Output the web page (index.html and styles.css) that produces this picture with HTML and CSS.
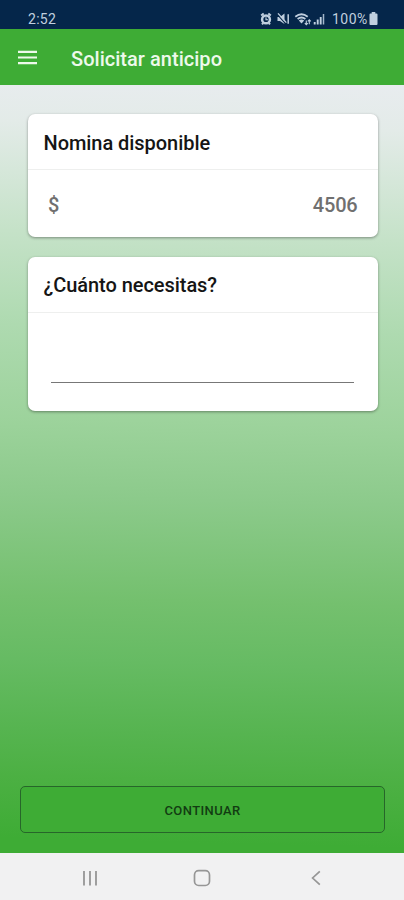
FILE: index.html
```html
<!DOCTYPE html>
<html lang="es">
<head>
<meta charset="utf-8">
<title>Solicitar anticipo</title>
<link rel="stylesheet" href="styles.css">
</head>
<body>
<div class="screen">
  <div class="status">
    <span class="time">2:52</span>
    <svg class="status-icons" width="66" height="16" viewBox="0 0 66 16" fill="none" stroke="currentColor">
      <circle cx="6" cy="8.4" r="3.9" stroke-width="2.5"/>
      <path d="M1.2 4.5 3.7 2.4M10.8 4.5 8.3 2.4M2 13.4 3.2 12M10 13.4 8.8 12" stroke-width="2"/>
      <path d="M6 6.3V8.8H8" stroke-width="1.1"/>
      <path d="M17.5 6H20L24.5 2.5V13L20 10H17.5Z" fill="currentColor" stroke="none"/>
      <path d="M17.2 3.4 25.7 12.8" stroke="#05264a" stroke-width="1.2"/>
      <path d="M18 2.4 26.3 11.6" stroke-width="1.4"/>
      <path d="M28.2 3.2V12.8" stroke-width="1.5"/>
      <path d="M35.3 5.7Q41.5 .8 47.7 5.7M37.6 8Q41.5 5 45.4 8" stroke-width="1.8"/>
      <path d="M38.8 9.5Q41.5 7.5 44.2 9.5L41.5 12.5Z" fill="currentColor" stroke="none"/>
      <path d="M46.3 9.5V13.8M44.8 12.2 46.3 13.8 47.8 12.2M49.3 13.2V8.8M47.8 10.4 49.3 8.8 50.8 10.4" stroke-width="1.1"/>
      <path d="M54.7 11V13.5M57.7 8.6V13.5M60.7 6V13.5" stroke-width="1.9"/>
      <path d="M63.5 3V13.5" stroke-width="1.5" opacity=".85"/>
    </svg>
    <span class="percent">100%</span>
    <svg class="battery" width="9" height="14" viewBox="0 0 9 14" fill="currentColor"><path d="M2.7 0H6.3V1.5H7.5Q8.5 1.5 8.5 2.5V12Q8.5 13 7.5 13H1.5Q.5 13 .5 12V2.5Q.5 1.5 1.5 1.5H2.7Z"/></svg>
  </div>
  <header class="toolbar">
    <svg class="menu" width="19" height="15" viewBox="0 0 19 15" stroke="currentColor" stroke-width="2.2"><path d="M0 1.8H19M0 7.5H19M0 13.2H19"/></svg>
    <h1 class="title">Solicitar anticipo</h1>
  </header>
  <main class="content">
    <section class="card">
      <h2 class="card-title">Nomina disponible</h2>
      <div class="amount"><span class="currency">$</span><span class="value">4506</span></div>
    </section>
    <section class="card">
      <h2 class="card-title second">¿Cuánto necesitas?</h2>
      <div class="field"></div>
    </section>
    <button class="continue"><span class="continue-label">CONTINUAR</span></button>
  </main>
  <nav class="navbar">
    <svg width="16" height="16" viewBox="0 0 16 16" fill="none" stroke="currentColor" stroke-width="1.8"><path d="M2 1V15.4M8 1V15.4M14 1V15.4"/></svg>
    <svg class="home" width="18" height="18" viewBox="0 0 18 18" fill="none" stroke="currentColor" stroke-width="1.7"><rect x="1.5" y="1.7" width="15" height="14.8" rx="4.2"/></svg>
    <svg width="10" height="16" viewBox="0 0 10 16" fill="none" stroke="currentColor" stroke-width="1.7"><path d="M8.8 1.3 1.6 8 8.8 14.7"/></svg>
  </nav>
</div>
</body>
</html>
```
FILE: styles.css
```css
* { box-sizing: border-box; }
body { margin: 0; font-family: Roboto, "Liberation Sans", sans-serif; }
.screen { width: 404px; height: 900px; display: flex; flex-direction: column; overflow: hidden; }
.status { height: 29px; padding: 9px 26px 0 28px; background: #05264a; color: #c0cfdf; display: flex; align-items: flex-start; font-size: 14px; line-height: 20px; }
.time { margin-right: auto; letter-spacing: .3px; }
.status-icons { margin: 2px 6px 0 0; }
.percent { width: 37px; white-space: nowrap; letter-spacing: .5px; }
.battery { margin-top: 3px; }
.toolbar { height: 56px; background: #3eac35; color: #edf9eb; display: flex; align-items: center; padding: 3px 18px 0; z-index: 1; }
.menu { margin-top: -2px; }
.title { margin: 0 0 0 34px; font-size: 20px; line-height: 24px; font-weight: 500; white-space: nowrap; letter-spacing: .03px; }
.content { flex: 1; display: flex; flex-direction: column; padding: 29px 19px 20px 20px; background: linear-gradient(181.5deg, #e8ecef 0%, #e3ebe8 6%, #c5e2c8 20%, #aedab0 32%, #9dd39c 44%, #8cca8b 54%, #74c06e 67%, #66bb63 75%, #56b450 84%, #4cb043 90%, #3eac35 98%); }
.card { margin: 0 7px 20px 8px; background: #fff; border-radius: 7px; box-shadow: 0 1px 3px rgba(0,0,0,.38); }
.card-title { margin: 0; height: 56px; padding: 3px 15.5px 0; display: flex; align-items: center; border-bottom: 1px solid #eeefee; color: #151515; font-size: 20px; font-weight: 500; letter-spacing: -.05px; }
.second { padding-top: 1px; }
.amount { height: 67px; padding: 3px 20.5px 0 20px; display: flex; justify-content: space-between; align-items: center; font-size: 20px; font-weight: 500; color: #707070; }
.value { letter-spacing: -.2px; }
.field { height: 70px; margin: 0 24px 28px 23px; border-bottom: 1px solid #777; }
.continue { margin-top: auto; height: 47px; border: 1.5px solid #27662a; border-radius: 5px; background: #3eac35; color: #123c12; font: 500 13px Roboto, sans-serif; letter-spacing: .4px; padding: 1px 0 0; }
.navbar { height: 47px; background: #f1f1f2; color: #969696; display: flex; align-items: center; justify-content: space-between; padding: 2px 83px 0 82px; }
.home { margin-right: 5px; }
```
